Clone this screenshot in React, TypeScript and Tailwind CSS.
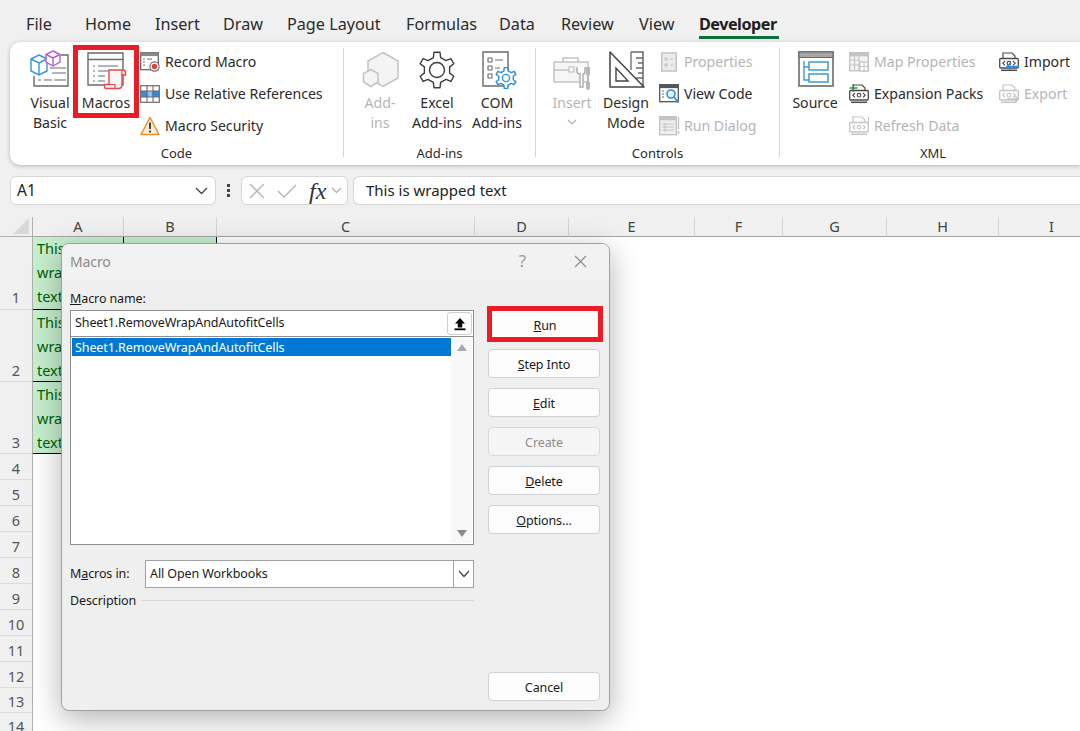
import React from "react";

function gear(cx: number, cy: number, ro: number, ri: number, n: number) {
  const pts: string[] = [];
  for (let i = 0; i < n; i++) {
    const a = -Math.PI / 2 + (i * 2 * Math.PI) / n;
    const s = (2 * Math.PI) / n;
    const add = (r: number, o: number) => pts.push(`${(cx + r * Math.cos(a + o * s)).toFixed(2)},${(cy + r * Math.sin(a + o * s)).toFixed(2)}`);
    add(ri, -0.27);
    add(ro, -0.16);
    add(ro, 0.16);
    add(ri, 0.27);
  }
  return "M" + pts.join("L") + "Z";
}

const G = "#6a6a6a";
const D = "#c4c4c4";

function VisualBasicIcon() {
  return (
    <svg width="40" height="38" viewBox="0 0 40 38" fill="none">
      <path d="M31 5H38V36H4V26" stroke={G} strokeWidth="1.4" />
      <path d="M20 18H36M22 23H36M8 30H11M14 30H22M24 30H36" stroke={G} strokeWidth="1.2" />
      <path d="M9 5L17 9V21L9 25L1 21V9Z" fill="#fff" stroke="#2f97dc" strokeWidth="1.4" />
      <path d="M1 9L9 13L17 9M9 13V25" stroke="#2f97dc" strokeWidth="1.4" />
      <path d="M23 1L30 4.5V12L23 16L16 12V4.5Z" fill="#fff" stroke="#b45fd0" strokeWidth="1.4" />
      <path d="M16 4.5L23 8L30 4.5M23 8V16" stroke="#b45fd0" strokeWidth="1.4" />
    </svg>
  );
}

function MacrosIcon() {
  return (
    <svg width="40" height="38" viewBox="0 0 40 38" fill="none">
      <path d="M1 1H36V33H1Z" stroke={G} strokeWidth="1.4" />
      <path d="M1 7.5H36" stroke={G} strokeWidth="1.4" />
      <path d="M6 14H8M11 14H31M6 19H8M11 19H22M6 24H8M11 24H18M6 29H8M11 29H18" stroke={G} strokeWidth="1.2" />
      <path d="M22 18H36Q38.5 18 38.5 20.5V23H35V33Q35 36.5 31.5 36.5H19Q17.5 36.5 17.5 34.5V32.5H22Z" fill="#f7f7f7" stroke="#e8484a" strokeWidth="1.4" />
      <path d="M35 18V23M17.5 32.5H28V36.5" stroke="#e8484a" strokeWidth="1.2" />
    </svg>
  );
}

function RecordIcon() {
  return (
    <svg width="20" height="20" viewBox="0 0 20 20" fill="none">
      <rect x="0.7" y="0.7" width="17.6" height="17" fill="#fff" stroke={G} strokeWidth="1.3" />
      <rect x="0.7" y="0.7" width="17.6" height="3.4" fill="#8a8a8a" />
      <path d="M3 7H5M7 7H12M3 10H5M3 13H5" stroke={G} strokeWidth="1" />
      <circle cx="14.5" cy="14.5" r="4.6" fill="#fff" stroke={G} strokeWidth="1.1" />
      <circle cx="14.5" cy="14.5" r="2.7" fill="#e83c3c" />
    </svg>
  );
}

function RelativeIcon() {
  return (
    <svg width="20" height="18" viewBox="0 0 20 18" fill="none">
      <rect x="0.7" y="0.7" width="18.6" height="16.6" fill="#fff" stroke={G} strokeWidth="1.2" />
      <rect x="1" y="6" width="18" height="6" fill="#3a8ad8" />
      <rect x="7.5" y="6" width="5" height="6" fill="#8fc2ee" />
      <path d="M7 1V17M13 1V17M1 6H19M1 12H19" stroke={G} strokeWidth="1.1" />
    </svg>
  );
}

function WarnIcon() {
  return (
    <svg width="20" height="20" viewBox="0 0 20 20" fill="none">
      <path d="M10 1.5L19 18.5H1Z" fill="#fcefd6" stroke="#e8902b" strokeWidth="1.5" strokeLinejoin="round" />
      <path d="M10 6.5V13" stroke="#444" strokeWidth="2" />
      <path d="M10 14.5V16.5" stroke="#444" strokeWidth="2" />
    </svg>
  );
}

function AddinsIcon() {
  return (
    <svg width="38" height="38" viewBox="0 0 38 38" fill="none">
      <path d="M21 1.5L36 10V27L21 35.5L6 27V10Z" fill="#f4f4f4" stroke={D} strokeWidth="1.5" />
      <path d="M9 18.5L16 22.5V31L9 35.5L1.5 31V22.5Z" fill="#f4f4f4" stroke={D} strokeWidth="1.5" />
    </svg>
  );
}

function GearIcon() {
  return (
    <svg width="38" height="38" viewBox="0 0 38 38" fill="none">
      <path d={gear(19, 19, 18, 13, 6)} fill="#fff" stroke="#3c3c3c" strokeWidth="1.4" strokeLinejoin="round" />
      <circle cx="19" cy="19" r="7.5" stroke="#3c3c3c" strokeWidth="1.4" />
    </svg>
  );
}

function ComIcon() {
  return (
    <svg width="36" height="40" viewBox="0 0 36 40" fill="none">
      <path d="M1 1H26V35H1Z" stroke={G} strokeWidth="1.4" />
      <path d="M6 7H10V11H6ZM6 15H10V19H6ZM6 23H10V27H6Z" stroke={G} strokeWidth="1.1" />
      <path d="M13 9H21M13 17H18" stroke={G} strokeWidth="1.2" />
      <path d={gear(24, 27, 10.5, 7.5, 6)} fill="#fff" stroke="#2f8fdc" strokeWidth="1.4" strokeLinejoin="round" />
      <circle cx="24" cy="27" r="3.6" stroke="#2f8fdc" strokeWidth="1.4" />
    </svg>
  );
}

function ToolboxIcon() {
  return (
    <svg width="40" height="38" viewBox="0 0 40 38" fill="none">
      <path d="M2 8H36V28H2Z" fill="#f6f6f6" stroke={D} strokeWidth="1.5" />
      <path d="M2 16H17M24 16H36M11 8V4H26V8" stroke={D} strokeWidth="1.5" />
      <rect x="17" y="13" width="5" height="5" fill="#fff" stroke={D} strokeWidth="1.3" />
      <path d="M25 13V17Q25 20 28 20V33H31V20Q33 20 33 17V13" fill="#fff" stroke="#b0b0b0" strokeWidth="1.5" />
      <path d="M34 13H38V21H37V28H38V34Q38 36 36 36T34 34V28H35V21H34Z" fill="#b8b8b8" />
    </svg>
  );
}

function DesignIcon() {
  return (
    <svg width="38" height="38" viewBox="0 0 38 38" fill="none">
      <path d="M23 2H35V37" stroke={G} strokeWidth="1.5" />
      <path d="M23 2V20M28 8H35M30 13H35M28 18H35M30 23H35M28 28H35" stroke={G} strokeWidth="1.3" />
      <path d="M2 2V37H36Z" fill="#fff" stroke="#444" strokeWidth="1.5" strokeLinejoin="round" />
      <path d="M8 18V31H20Z" stroke="#444" strokeWidth="1.4" />
    </svg>
  );
}

function PropsIcon() {
  return (
    <svg width="20" height="20" viewBox="0 0 20 20" fill="none">
      <rect x="2.7" y="1" width="14.5" height="18" fill="#ececec" stroke={D} strokeWidth="1.5" />
      <path d="M6 6H8V8H6ZM6 12H8V14H6ZM11 7H14M11 13H14" stroke={D} strokeWidth="1.2" />
    </svg>
  );
}

function ViewCodeIcon() {
  return (
    <svg width="21" height="20" viewBox="0 0 21 20" fill="none">
      <rect x="0.7" y="0.7" width="18.6" height="17" fill="#fff" stroke="#555" strokeWidth="1.3" />
      <rect x="0.7" y="0.7" width="18.6" height="3.4" fill="#555" />
      <path d="M3 7H5M3 10H5M3 13H5" stroke="#666" strokeWidth="1" />
      <circle cx="12" cy="10" r="4" fill="#e6f2fb" stroke="#2f8fdc" strokeWidth="1.6" />
      <path d="M15 13L19.5 18.5" stroke="#2f8fdc" strokeWidth="1.8" />
    </svg>
  );
}

function RunDialogIcon() {
  return (
    <svg width="21" height="20" viewBox="0 0 21 20" fill="none">
      <rect x="0.7" y="0.7" width="16.6" height="18" fill="#efefef" stroke={D} strokeWidth="1.4" />
      <rect x="0.7" y="0.7" width="16.6" height="3.6" fill={D} />
      <path d="M3 8H15M3 11H15M3 14H15M6 7V16" stroke={D} strokeWidth="1" />
      <path d="M19.5 1V13M19.5 15V18" stroke={D} strokeWidth="1.4" />
    </svg>
  );
}

function SourceIcon() {
  return (
    <svg width="38" height="38" viewBox="0 0 38 38" fill="none">
      <rect x="1" y="1" width="34" height="34" fill="#fff" stroke={G} strokeWidth="1.6" />
      <rect x="1" y="1" width="34" height="5.5" fill="#a6a6a6" stroke={G} strokeWidth="1" />
      <path d="M6 10V29H11M6 16H11" stroke="#3a9ad9" strokeWidth="1.4" />
      <rect x="11" y="11" width="19" height="8" stroke="#3a9ad9" strokeWidth="1.5" />
      <rect x="11" y="23" width="19" height="8" stroke="#3a9ad9" strokeWidth="1.5" />
    </svg>
  );
}

function MapPropsIcon() {
  return (
    <svg width="20" height="20" viewBox="0 0 20 20" fill="none">
      <rect x="0.7" y="0.7" width="18.6" height="18" fill="#f3f3f3" stroke={D} strokeWidth="1.4" />
      <rect x="0.7" y="0.7" width="18.6" height="3.6" fill={D} />
      <path d="M1 8H10M1 13H10M5.5 4V19M10 4V19" stroke={D} strokeWidth="1.1" />
      <rect x="11" y="10" width="8" height="9" fill="#fff" stroke={D} strokeWidth="1.2" />
      <path d="M15 10V19M11 14.5H19" stroke={D} strokeWidth="1" />
    </svg>
  );
}

function XmlDoc({ c, plus, arrow, out, side }: { c: string; plus?: boolean; arrow?: boolean; out?: boolean; side?: boolean }) {
  return (
    <svg width="20" height="20" viewBox="0 0 20 20" fill="none">
      <path d="M4 7V1H13L16 4V7" stroke={c} strokeWidth="1.2" />
      <rect x="0.7" y="6.5" width="18.6" height="9.5" rx="1" fill="#fff" stroke={c} strokeWidth="1.3" />
      <path d="M2 18.3H18" stroke={c} strokeWidth="1.5" />
      <path d="M6 9L3.8 11.2L6 13.4M14 9L16.2 11.2L14 13.4" stroke={c} strokeWidth="1.1" />
      <circle cx="10" cy="11.2" r="1.8" stroke={c} strokeWidth="1.1" />
      {plus && <path d="M4.5 0V8M0.5 4H8.5" stroke="#2e9a4c" strokeWidth="1.4" />}
      {arrow && <path d="M20 14.5H8M11.5 11L8 14.5L11.5 18" stroke="#2f8fdc" strokeWidth="1.5" fill="none" />}
      {out && <path d="M8 15H19M16 12L19.5 15L16 18" stroke={c} strokeWidth="1.4" fill="none" />}
      {side && <path d="M19.5 1V10" stroke={c} strokeWidth="1.2" />}
    </svg>
  );
}

function Large({ w, icon, lines, disabled, extra, pad }: { w: string; icon: React.ReactNode; lines: string[]; disabled?: boolean; extra?: React.ReactNode; pad?: string }) {
  return (
    <div className={`${w} shrink-0 flex flex-col items-center ${disabled ? "text-[#b5b5b5]" : "text-[#2b2b2b]"}`}>
      <div className={`h-[43px] flex items-start justify-center ${pad ?? ""}`}>{icon}</div>
      <div className="text-center leading-[20px] whitespace-nowrap">
        {lines.map((l) => (
          <div key={l}>{l}</div>
        ))}
        {extra}
      </div>
    </div>
  );
}

function Small({ icon, label, disabled }: { icon: React.ReactNode; label: string; disabled?: boolean }) {
  return (
    <div className={`h-[32px] flex items-center whitespace-nowrap ${disabled ? "text-[#b5b5b5]" : "text-[#2b2b2b]"}`}>
      <div className="w-[25px] shrink-0">{icon}</div>
      <span>{label}</span>
    </div>
  );
}

function Group({ w, label, children, last }: { w: string; label: string; children: React.ReactNode; last?: boolean }) {
  return (
    <div className={`${w} shrink-0 h-[109px] flex flex-col ${last ? "" : "border-r border-[#d4d4d4]"}`}>
      <div className="flex-1 flex items-start">{children}</div>
      <div className="text-center text-[13px] leading-[18px] text-[#2b2b2b] mb-[-5px]">{label}</div>
    </div>
  );
}

const tabs: [string, string][] = [
  ["File", "w-[59px]"],
  ["Home", "w-[70px]"],
  ["Insert", "w-[68px]"],
  ["Draw", "w-[64px]"],
  ["Page Layout", "w-[119px]"],
  ["Formulas", "w-[93px]"],
  ["Data", "w-[62px]"],
  ["Review", "w-[78px]"],
  ["View", "w-[60px]"],
];

const cols: [string, string][] = [
  ["A", "w-[91px]"],
  ["B", "w-[93px]"],
  ["C", "w-[258px]"],
  ["D", "w-[94px]"],
  ["E", "w-[126px]"],
  ["F", "w-[88px]"],
  ["G", "w-[104px]"],
  ["H", "w-[112px]"],
  ["I", "w-[106px]"],
];

const shortRows = [26, 26, 26, 26, 26, 26, 26, 26, 26, 25, 25];

function DlgButton({ label, u, disabled }: { label: string; u?: number; disabled?: boolean }) {
  const i = u ?? -1;
  return (
    <div className={`w-[112px] h-[29px] mb-[10px] pt-[4px] rounded-[4px] border flex items-center justify-center ${disabled ? "bg-[#f5f5f5] border-[#d9d9d9] text-[#8f8f8f]" : "bg-[#fdfdfd] border-[#d0d0d0] text-[#1a1a1a]"}`}>
      {i >= 0 ? (
        <span>
          {label.slice(0, i)}
          <span className="underline">{label[i]}</span>
          {label.slice(i + 1)}
        </span>
      ) : (
        <span>{label}</span>
      )}
    </div>
  );
}

function Dialog() {
  return (
    <div className="absolute left-[61px] top-[243px] w-[549px] h-[468px] rounded-[8px] border border-[#a0a0a0] bg-[#efefef] shadow-[0_8px_30px_rgba(0,0,0,0.3)] flex flex-col overflow-hidden text-[12.5px] text-[#1a1a1a] tracking-[-0.1px]">
      <div className="h-[36px] shrink-0 bg-[#f2f2f2] flex items-center pl-[8px] pr-[22px] pb-[2px]">
        <span className="text-[14px] text-[#8a8a8a] flex-1">Macro</span>
        <span className="text-[17px] text-[#9a9a9a] mr-[48px]">?</span>
        <svg width="13" height="13" viewBox="0 0 13 13" fill="none">
          <path d="M1 1L12 12M12 1L1 12" stroke="#8a8a8a" strokeWidth="1.1" />
        </svg>
      </div>
      <div className="flex-1 flex pl-[8px] pr-[9px]">
        <div className="w-[405px] shrink-0 flex flex-col pt-[8px]">
          <div className="h-[22px] leading-[22px]">
            <span className="underline">M</span>acro name:
          </div>
          <div className="h-[27px] w-[404px] bg-white border border-[#8f8f8f] flex items-center pl-[4px] pr-[1px]">
            <span className="flex-1">Sheet1.RemoveWrapAndAutofitCells</span>
            <div className="w-[25px] h-[23px] rounded-[3px] border border-[#d0d0d0] bg-[#fdfdfd] flex items-center justify-center">
              <svg width="14" height="14" viewBox="0 0 14 14">
                <path d="M7 1L12 6.5H9.2V10.5H4.8V6.5H2Z" fill="#000" />
                <path d="M1.5 12.3H12.5" stroke="#000" strokeWidth="1.8" />
              </svg>
            </div>
          </div>
          <div className="mt-[-1px] h-[209px] w-[404px] bg-white border border-[#8f8f8f] flex p-[1px]">
            <div className="flex-1">
              <div className="h-[18px] bg-[#0078d4] text-white pl-[3px] pt-[1px] leading-[18px]">Sheet1.RemoveWrapAndAutofitCells</div>
            </div>
            <div className="w-[21px] flex flex-col justify-between items-center py-[5px] bg-[#f8f8f8]">
              <svg width="10" height="8" viewBox="0 0 10 8"><path d="M5 1L10 8H0Z" fill="#a8a8a8" /></svg>
              <svg width="10" height="8" viewBox="0 0 10 8"><path d="M0 0H10L5 7Z" fill="#8a8a8a" /></svg>
            </div>
          </div>
          <div className="mt-[15px] h-[28px] flex items-center">
            <span className="w-[75px]">
              M<span className="underline">a</span>cros in:
            </span>
            <div className="w-[329px] h-[28px] bg-white border border-[#a0a0a0] flex items-center pl-[4px]">
              <span className="flex-1">All Open Workbooks</span>
              <div className="w-[20px] h-[26px] flex items-center justify-center border-l border-[#a0a0a0]">
                <svg width="12" height="8" viewBox="0 0 12 8" fill="none"><path d="M1 1L6 6.5L11 1" stroke="#444" strokeWidth="1.2" /></svg>
              </div>
            </div>
          </div>
          <div className="mt-[3px] h-[20px] flex items-center w-[404px]">
            <span>Description</span>
            <div className="flex-1 h-px bg-[#d8d8d8] ml-[5px] mt-[-2px]" />
          </div>
        </div>
        <div className="flex flex-col pl-[13px] pt-[26px] pb-[9px]">
          <div className="w-[116px] h-[36px] ml-[-1px] mb-[7px] pt-[4px] border-[5px] border-[#ed1c24] bg-[#fdfdfd] flex items-center justify-center text-[#1a1a1a]">
            <span><span className="underline">R</span>un</span>
          </div>
          <DlgButton label="Step Into" u={0} />
          <DlgButton label="Edit" u={0} />
          <DlgButton label="Create" disabled />
          <DlgButton label="Delete" u={0} />
          <DlgButton label="Options..." u={0} />
          <div className="mt-auto">
            <div className="w-[112px] h-[29px] pt-[4px] rounded-[4px] border border-[#d0d0d0] bg-[#fdfdfd] flex items-center justify-center">Cancel</div>
          </div>
        </div>
      </div>
    </div>
  );
}

export default function App() {
  return (
    <div className="relative w-[1080px] h-[731px] overflow-hidden bg-[#f0f0f0] [font-family:'Noto_Sans',sans-serif] text-[14.1px]">
      {/* tabs */}
      <div className="h-[42px] flex items-start pl-[26px] pt-[13px] text-[16.2px] leading-[22px] text-[#2b2b2b] whitespace-nowrap">
        {tabs.map(([t, w]) => (
          <div key={t} className={w}>{t}</div>
        ))}
        <div className="w-[80px] font-bold text-[#1f1f1f] border-b-[3px] border-[#0e6f3b] h-[26px] tracking-[-0.5px]">Developer</div>
      </div>

      {/* ribbon */}
      <div className="ml-[10px] h-[123px] bg-white rounded-l-[10px] shadow-[0_1px_4px_rgba(0,0,0,0.25)] flex pt-[6px]">
        <Group w="w-[334px]" label="Code">
          <div className="flex pt-[2px] pl-[14px]">
            <Large w="w-[52px]" icon={<VisualBasicIcon />} lines={["Visual", "Basic"]} />
            <div className="w-[2px]" />
            <div className="w-[56px] h-[63px] outline-[5px] outline-[#ed1c24]">
              <Large w="w-[56px]" pad="pt-[2px] pl-[1px]" icon={<MacrosIcon />} lines={["Macros"]} />
            </div>
            <div className="pl-[6px] mt-[-4px]">
              <Small icon={<RecordIcon />} label="Record Macro" />
              <Small icon={<RelativeIcon />} label="Use Relative References" />
              <Small icon={<WarnIcon />} label="Macro Security" />
            </div>
          </div>
        </Group>
        <Group w="w-[192px]" label="Add-ins">
          <div className="flex pt-[2px] pl-[8px]">
            <Large w="w-[56px]" pad="pt-[1px] pl-[1px]" icon={<AddinsIcon />} lines={["Add-", "ins"]} disabled />
            <Large w="w-[58px]" pad="pt-[1px]" icon={<GearIcon />} lines={["Excel", "Add-ins"]} />
            <Large w="w-[62px]" pad="pt-[1px] pl-[6px]" icon={<ComIcon />} lines={["COM", "Add-ins"]} />
          </div>
        </Group>
        <Group w="w-[244px]" label="Controls">
          <div className="flex pt-[2px] pl-[10px]">
            <Large
              w="w-[52px]"
              pad="pt-[4px]"
              icon={<ToolboxIcon />}
              lines={["Insert"]}
              disabled
              extra={
                <div className="flex justify-center pt-[6px]">
                  <svg width="10" height="6" viewBox="0 0 10 6" fill="none"><path d="M1 1L5 5L9 1" stroke="#b0b0b0" strokeWidth="1.1" /></svg>
                </div>
              }
            />
            <Large w="w-[56px]" pad="pl-[2px]" icon={<DesignIcon />} lines={["Design", "Mode"]} />
            <div className="pl-[5px] mt-[-4px]">
              <Small icon={<PropsIcon />} label="Properties" disabled />
              <Small icon={<ViewCodeIcon />} label="View Code" />
              <Small icon={<RunDialogIcon />} label="Run Dialog" disabled />
            </div>
          </div>
        </Group>
        <Group w="w-[306px]" label="XML" last>
          <div className="flex pt-[2px] pl-[10px]">
            <Large w="w-[50px]" pad="pt-[1px] pl-[3px]" icon={<SourceIcon />} lines={["Source"]} />
            <div className="pl-[9px] mt-[-4px] w-[159px] shrink-0">
              <Small icon={<MapPropsIcon />} label="Map Properties" disabled />
              <Small icon={<XmlDoc c="#4a4a4a" plus />} label="Expansion Packs" />
              <Small icon={<XmlDoc c={D} side />} label="Refresh Data" disabled />
            </div>
            <div className="mt-[-4px]">
              <Small icon={<XmlDoc c="#4a4a4a" arrow />} label="Import" />
              <Small icon={<XmlDoc c={D} out />} label="Export" disabled />
            </div>
          </div>
        </Group>
      </div>

      {/* formula bar */}
      <div className="mt-[11px] h-[29px] flex items-center pl-[10px]">
        <div className="w-[206px] h-[29px] rounded-[6px] border border-[#d6d6d6] bg-white flex items-center pl-[6px] pr-[7px] text-[15.5px] text-[#222]">
          <span className="flex-1">A1</span>
          <svg width="13" height="8" viewBox="0 0 13 8" fill="none"><path d="M1 1L6.5 6.5L12 1" stroke="#444" strokeWidth="1.3" /></svg>
        </div>
        <div className="w-[25px] flex flex-col items-center gap-[2px]">
          <div className="w-[3px] h-[3px] bg-[#444]" />
          <div className="w-[3px] h-[3px] bg-[#444]" />
          <div className="w-[3px] h-[3px] bg-[#444]" />
        </div>
        <div className="w-[107px] h-[29px] rounded-[6px] border border-[#d6d6d6] bg-white flex items-center pl-[7px] gap-[12px]">
          <svg width="16" height="16" viewBox="0 0 16 16" fill="none"><path d="M1 1L15 15M15 1L1 15" stroke="#b3b3b3" strokeWidth="1.3" /></svg>
          <svg width="20" height="14" viewBox="0 0 20 14" fill="none"><path d="M1 7L7 13L19 1" stroke="#b3b3b3" strokeWidth="1.3" /></svg>
          <div className="flex items-center gap-[3px]">
            <span className="[font-family:'Liberation_Serif',serif] italic text-[24px] leading-none text-[#333] w-[19px] whitespace-nowrap">fx</span>
            <svg width="11" height="7" viewBox="0 0 11 7" fill="none"><path d="M1 1L5.5 5.5L10 1" stroke="#aaa" strokeWidth="1.1" /></svg>
          </div>
        </div>
        <div className="ml-[5px] flex-1 h-[29px] rounded-l-[6px] border border-r-0 border-[#d6d6d6] bg-white flex items-center pl-[12px] text-[15px] text-[#222]">
          This is wrapped text
        </div>
      </div>

      {/* column headers */}
      <div className="mt-[12px] h-[20px] flex">
        <div className="w-[33px] shrink-0 relative border-r border-b border-[#b0b0b0]">
          <div className="absolute right-[3px] bottom-[2px] w-0 h-0 border-l-[16px] border-l-transparent border-b-[16px] border-b-[#d8d8d8]" />
        </div>
        {cols.map(([c, w]) => (
          <div key={c} className={`${w} shrink-0 border-r border-b border-r-[#d4d4d4] border-b-[#a6a6a6] flex items-center justify-center text-[#444] text-[14.5px]`}>
            {c}
          </div>
        ))}
      </div>

      {/* rows */}
      <div className="flex">
        <div className="w-[33px] shrink-0 border-r border-[#b0b0b0] text-[#555] text-[14.5px]">
          {[73, 72, 72].map((h, i) => (
            <div key={i} className={`border-b border-[#dcdcdc] flex items-end justify-center leading-[20px] ${i === 0 ? "pb-[2px]" : "pb-[1px]"}`} style={{ height: h }}>
              {i + 1}
            </div>
          ))}
          {shortRows.map((h, i) => (
            <div key={i} className="border-b border-[#dcdcdc] flex items-center justify-center pt-[2px] leading-[20px]" style={{ height: h }}>
              {i + 4}
            </div>
          ))}
        </div>
        <div className="flex-1 bg-white">
          {[73, 72, 72].map((h, i) => (
            <div key={i} className="flex" style={{ height: h }}>
              {[0, 1].map((c) => (
                <div key={c} className={`${c === 0 ? "w-[91px]" : "w-[93px]"} bg-[#c6efce] border-r border-b border-black text-[#006100] text-[14.5px] leading-[24px] px-[4px] overflow-hidden`}>
                  <div className={i === 0 ? "mt-[-1px]" : ""}>This is wrapped text</div>
                </div>
              ))}
            </div>
          ))}
        </div>
      </div>

      <Dialog />
    </div>
  );
}
